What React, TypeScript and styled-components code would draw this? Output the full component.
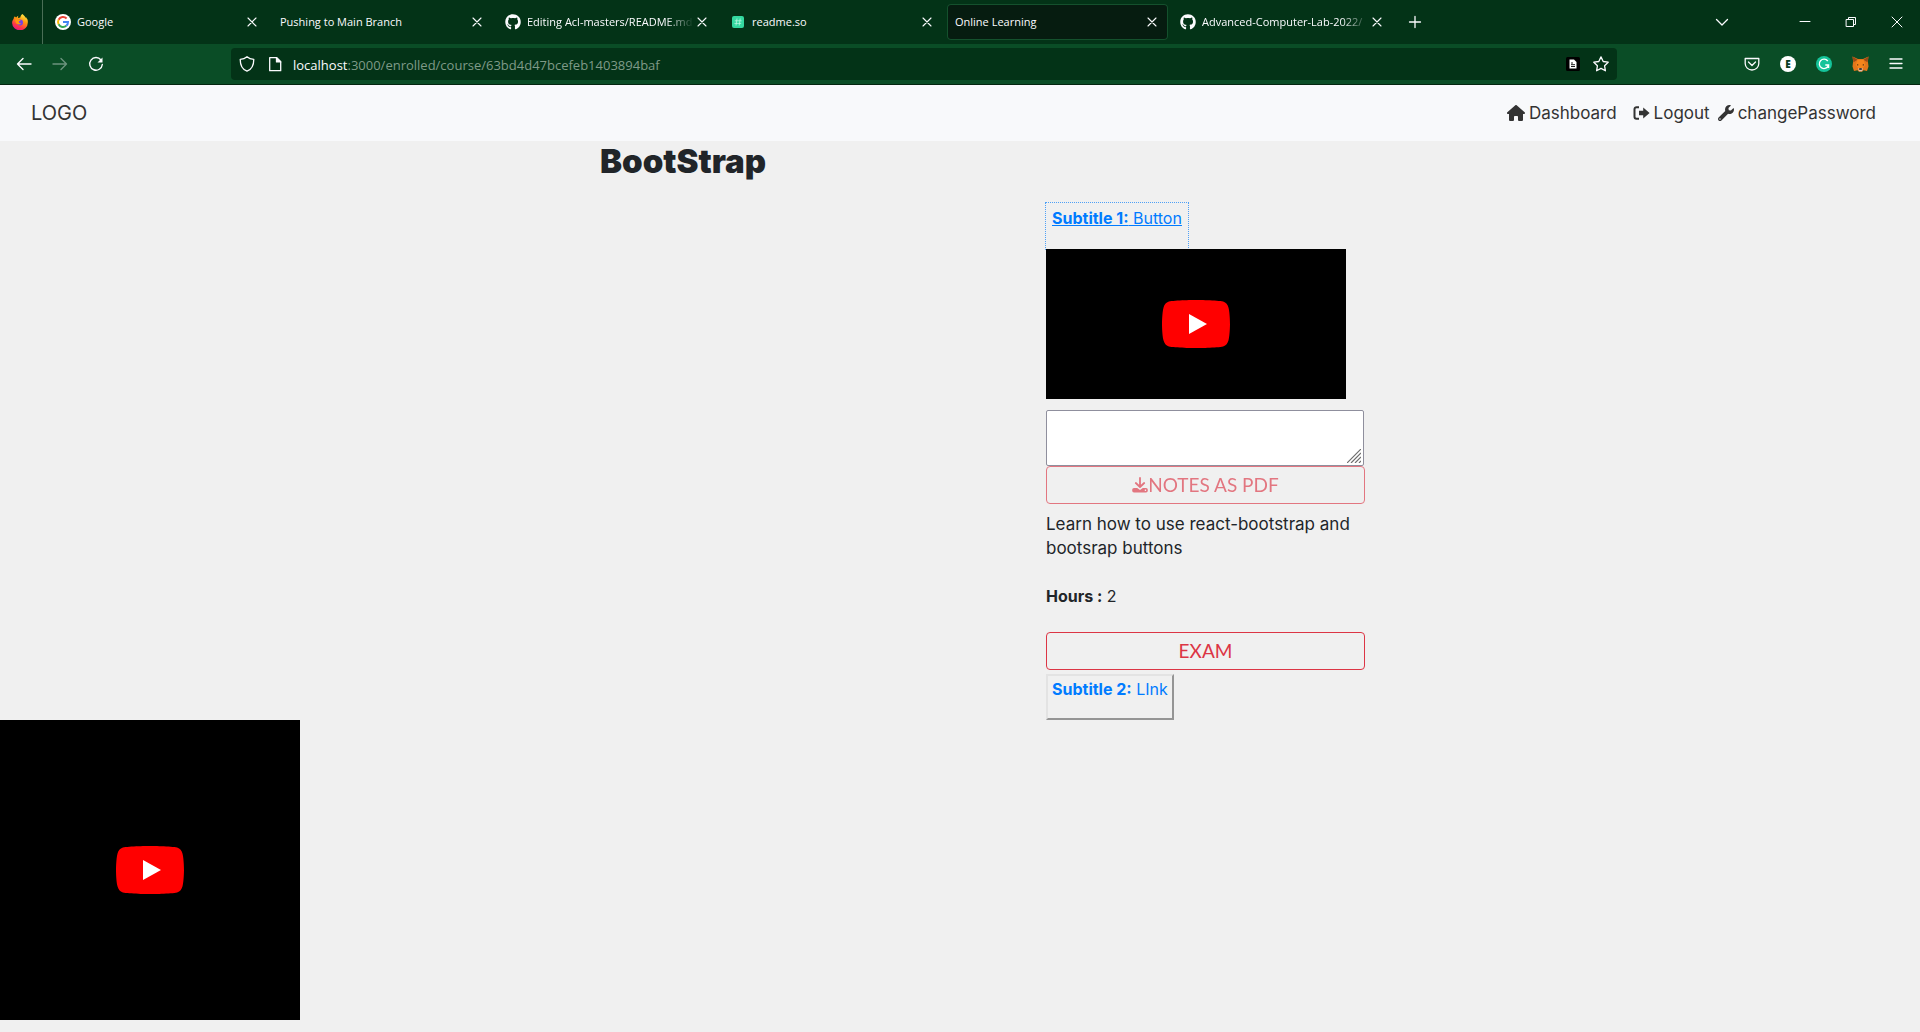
import React from "react";
import styled, { createGlobalStyle, css } from "styled-components";
import { FaGithub, FaWrench } from "react-icons/fa";
import { FaHouse } from "react-icons/fa6";

const Global = createGlobalStyle`
  *, *::before, *::after { box-sizing: border-box; }
  body {
    margin: 0;
    background: #f0f0f0;
    color: #212529;
    font: 17px/24px Inter, "Liberation Sans", sans-serif;
  }
  button, textarea, input { font: inherit; color: inherit; }
  svg { display: block; flex: none; }
`;

const uiFont = css`
  font-family: "Open Sans", "Noto Sans", sans-serif;
`;

/* ---------- browser frame ---------- */

const Frame = styled.header`
  ${uiFont}
  color: #fbfbfe;
  border-bottom: 1px solid #03250f;
`;

const TabBar = styled.div`
  display: flex;
  align-items: center;
  height: 44px;
  background: #033317;
`;

const BrandCell = styled.div`
  display: flex;
  align-items: center;
  justify-content: center;
  width: 43px;
  height: 44px;
  padding-right: 3px;
  border-right: 1px solid #4a6e56;
`;

const TabList = styled.div`
  display: flex;
  flex: 0 1 1346px;
  gap: 4px;
  min-width: 0;
  margin-left: 4px;
`;

const Tab = styled.div<{ $active?: boolean }>`
  display: flex;
  flex: 1 1 0;
  align-items: center;
  min-width: 0;
  height: 36px;
  padding: 0 8px;
  border-radius: 4px;
  ${(p) => p.$active && css`
    background: #061c10;
    box-shadow: inset 0 0 0 1px #14512d;
  `}
`;

const TabTitle = styled.button<{ $fade?: boolean }>`
  display: flex;
  flex: 1;
  align-items: center;
  gap: 6px;
  min-width: 0;
  height: 36px;
  padding: 0;
  border: 0;
  background: none;
  font-size: 11px;
  line-height: 16px;
  white-space: nowrap;
  overflow: hidden;
  ${(p) => p.$fade && css`
    mask-image: linear-gradient(to left, transparent, #000 28px);
  `}
`;

const IconButton = styled.button<{ $w?: number; $dim?: boolean }>`
  display: flex;
  align-items: center;
  justify-content: center;
  flex: none;
  width: ${(p) => p.$w ?? 36}px;
  height: 32px;
  padding: 0;
  border: 0;
  background: none;
  opacity: ${(p) => (p.$dim ? 0.4 : 1)};
`;

const TabsMenu = styled.div`
  display: flex;
  margin-left: auto;
`;

const WindowControls = styled.div`
  display: flex;
  margin-left: 42px;
`;

const Toolbar = styled.div`
  display: flex;
  align-items: center;
  height: 40px;
  padding: 0 6px;
  background: #0a4d26;
`;

const ToolGroup = styled.div`
  display: flex;
  flex: 1 0 auto;
`;

const ToolGroupEnd = styled(ToolGroup)`
  justify-content: flex-end;
`;

const UrlBar = styled.div`
  display: flex;
  align-items: center;
  flex: 0 1 1386px;
  min-width: 0;
  height: 32px;
  padding: 0 2px;
  border-radius: 4px;
  background: #033317;
`;

const Address = styled.div`
  flex: 1;
  min-width: 0;
  padding: 2px 0 0 4px;
  overflow: hidden;
  white-space: nowrap;
  font-size: 13px;
  line-height: 20px;
  color: #7f9a88;
  span { color: #fbfbfe; }
`;

/* ---------- page ---------- */

const SiteNav = styled.nav`
  display: flex;
  align-items: center;
  justify-content: space-between;
  height: 56px;
  padding: 0 44px 0 31px;
  background: #f8f9fb;
  color: #333;
`;

const Brand = styled.a`
  font-size: 20px;
  line-height: 30px;
  color: inherit;
  text-decoration: none;
`;

const NavLinks = styled.div`
  display: flex;
  align-items: center;
`;

const NavLink = styled.a<{ $gap?: number }>`
  display: flex;
  align-items: center;
  gap: 4px;
  margin-left: ${(p) => p.$gap ?? 0}px;
  color: inherit;
  text-decoration: none;
`;

const Course = styled.main`
  display: grid;
  grid-template-columns: 600fr 446fr 319fr 555fr;
`;

const Title = styled.h1`
  grid-column: 2 / -1;
  margin: 0 0 22px;
  font-size: 33px;
  font-weight: 900;
  line-height: 40px;
`;

const Lesson = styled.section`
  grid-column: 3;
  display: flex;
  flex-direction: column;
  align-items: flex-start;
`;

const SubtitleButton = styled.button<{ $focused?: boolean }>`
  height: 46px;
  padding: 1px 4px 17px;
  border: 2px solid;
  border-color: #e3e3e3 #959595 #959595 #e3e3e3;
  background: none;
  color: #007bff;
  white-space: nowrap;
  font-size: 16px;
  line-height: 24px;
  ${(p) => p.$focused && css`
    border-color: transparent;
    outline: 1px dotted #4fa0f5;
    text-decoration: underline;
  `}
`;

const Video = styled.div<{ $h: number }>`
  position: relative;
  z-index: 1;
  display: flex;
  align-items: center;
  justify-content: center;
  width: 300px;
  height: ${(p) => p.$h}px;
  background: #000;
`;

const PlayButton = styled.button`
  padding: 0;
  border: 0;
  background: none;
`;

const NotesField = styled.div`
  position: relative;
  width: 100%;
  margin-top: 11px;
  padding-right: 1px;
`;

const Notes = styled.textarea`
  display: block;
  width: 100%;
  height: 56px;
  padding: 2px;
  border: 1px solid #8f8f9d;
  border-radius: 2px;
  background: #fff;
  resize: none;
`;

const Grip = styled.svg`
  position: absolute;
  right: 4px;
  bottom: 3px;
  pointer-events: none;
`;

const OutlineButton = styled.button<{ $muted?: boolean }>`
  display: flex;
  align-items: center;
  justify-content: center;
  width: 100%;
  height: 38px;
  padding: 0 12px;
  border: 1px solid #dc3545;
  border-radius: 4px;
  background: none;
  color: #dc3545;
  font-family: Lato, "Liberation Sans", sans-serif;
  font-size: 19px;
  opacity: ${(p) => (p.$muted ? 0.65 : 1)};
`;

const Details = styled.div`
  margin: 8px 0 24px;
  p { margin: 0 0 24px; }
  p:last-child { margin: 0; font-size: 16px; }
`;

const Spacer = styled.div`
  height: 4px;
`;

/* ---------- drawings ---------- */

const Line = ({ d, size = 16, w = 1.3 }: { d: string; size?: number; w?: number }) => (
  <svg width={size} height={size} viewBox="0 0 16 16" fill="none" stroke="currentColor"
    strokeWidth={w} strokeLinecap="round" strokeLinejoin="round"><path d={d} /></svg>
);

const Firefox = () => (
  <svg width="16" height="16" viewBox="0 0 16 16">
    <defs>
      <linearGradient id="fx" x1="0.8" y1="0" x2="0.3" y2="1">
        <stop offset="0" stopColor="#fff44f" /><stop offset="0.4" stopColor="#ff980e" />
        <stop offset="0.75" stopColor="#ff3647" /><stop offset="1" stopColor="#e31587" />
      </linearGradient>
    </defs>
    <path fill="url(#fx)" d="M15.4 5.3c-.4-.9-1.1-1.8-1.7-2.1.3.6.5 1.1.6 1.5C13.300 2.500 11.700 1.500 10.500 0 8.900 1 8.400 2.700 8.300 3.500c-.8 0-1.500.3-2.100.6-.3-.8-.2-1.700.2-2.400-.9.4-1.700 1.200-2.200 1.800-.6-.1-1.100-.7-1.200-1.200C1.700 3.200 1.700 4.300 1.700 4.800.700 6 .1 7.500.1 9a7.800 7.400 0 0 0 15.700-.3c.1-1.200 0-2.400-.4-3.400z" />
    <circle cx="8" cy="8.400" r="3" fill="#7542e5" />
    <path fill="#ff980e" d="M3 5.500c1.300-.8 2.600-.7 3.800.2 1 .1 1.900.1 1.700.7-.3.600-1.400.6-1.700 1.100-.1 1.500 1.300 2 2.600 1.500-1.300 2.300-5.600 1.700-6-1.600z" />
  </svg>
);

const Google = () => (
  <svg width="16" height="16" viewBox="0 0 16 16">
    <circle cx="8" cy="8" r="8" fill="#fff" />
    <g fill="none" strokeWidth="2">
      <path stroke="#ea4335" d="M3.600 5.700A5 5 0 0 1 11.600 4.500" />
      <path stroke="#fbbc05" d="M3.600 10.300A5 5 0 0 1 3.600 5.700" />
      <path stroke="#34a853" d="M11.300 11.800A5 5 0 0 1 3.600 10.300" />
      <path stroke="#4285f4" d="M8 8h5A5 5 0 0 1 11.300 11.800" />
    </g>
  </svg>
);

const ReadmeSo = () => (
  <svg width="16" height="16" viewBox="0 0 16 16">
    <rect x="2" y="2" width="12" height="12" rx="2" fill="#34d9a0" />
    <path d="M7 4.500l-1 7M10.200 4.500l-1 7M4.800 6.800h6.800M4.400 9.400h6.800" stroke="#b8f7df" strokeWidth="0.800" />
  </svg>
);

const PageBadge = () => (
  <svg width="14" height="14" viewBox="0 0 14 14">
    <rect width="14" height="14" rx="1.500" fill="#000" />
    <path d="M3.500 2.500h4.500l2.500 2.500v6.500h-7z" fill="#fff" />
    <path d="M5 6h2M5 7.700h4M5 9.500h4" stroke="#000" strokeWidth="0.900" />
  </svg>
);

const Grammarly = () => (
  <svg width="16" height="16" viewBox="0 0 16 16">
    <circle cx="8" cy="8" r="8" fill="#15c39a" />
    <path d="M11.800 5A4.700 4.700 0 1 0 12.500 9.300M9.300 9h3.300v3" fill="none" stroke="#fff" strokeWidth="1.300" />
  </svg>
);

const AccountBadge = styled.span`
  display: flex;
  align-items: center;
  justify-content: center;
  width: 16px;
  height: 16px;
  border-radius: 50%;
  background: #fff;
  color: #0a3d20;
  font-size: 10px;
  font-weight: 800;
  line-height: 16px;
`;

const Fox = () => (
  <svg width="17" height="16" viewBox="0 0 17 16">
    <path fill="#e2761b" d="M.5.500l5.500 2.500h5l5.500-2.500-.6 5 .6 5-1.500 4.500-3.500-.8-1.500 1.500h-3l-1.500-1.500-3.500.8L.5 10.500l.6-5z" />
    <path fill="#9a4a17" d="M.5.500l5 3.300-4 2.500zM16.500.500l-5 3.300 4 2.500z" />
    <path fill="#f6851b" d="M5.500 4h6l2 5-3 3.500h-4l-3-3.500z" />
    <path fill="#d7c1b3" d="M6.200 12.200h4.600l-.6 3h-3.400z" />
    <path fill="#161616" d="M7.300 12.200h2.400l.2 1.500h-2.800zM5 8.300l1.800.8-1.600.4zM12 8.300l-1.800.8 1.600.4z" />
  </svg>
);

const YouTube = () => (
  <svg width="68" height="48" viewBox="0 0 68 48">
    <path fill="#f00" d="M66.520 7.740c-.78-2.930-2.490-5.410-5.420-6.190C55.790.130 34 0 34 0S12.210.130 6.900 1.550c-2.930.780-4.630 3.260-5.420 6.190C.060 13.050 0 24 0 24s.060 10.950 1.480 16.260c.780 2.930 2.490 5.410 5.420 6.190C12.210 47.870 34 48 34 48s21.790-.130 27.100-1.550c2.930-.780 4.640-3.260 5.420-6.190C67.940 34.950 68 24 68 24s-.060-10.950-1.480-16.260z" />
    <path fill="#fff" d="M45 24 27 14v20" />
  </svg>
);

const LogoutIcon = () => (
  <svg width="17" height="16" viewBox="0 0 17 16">
    <path d="M6 2.200H3.500a2 2 0 0 0-2 2v7.600a2 2 0 0 0 2 2H6" fill="none" stroke="currentColor" strokeWidth="2" />
    <path d="M6 5.800h4.200V2.600L16.600 8l-6.400 5.400v-3.200H6z" fill="currentColor" />
  </svg>
);

const DownloadIcon = () => (
  <svg width="16" height="16" viewBox="0 0 16 16">
    <path d="M8 1v8.500M3.800 6L8 10L12.200 6" fill="none" stroke="currentColor" strokeWidth="1.800" strokeLinecap="round" strokeLinejoin="round" />
    <path fillRule="evenodd" d="M2 11h3.200L8 13l2.800-2H14a1.800 1.800 0 0 1 1.800 1.800v1A1.800 1.800 0 0 1 14 15.600H2A1.800 1.800 0 0 1 .2 13.800v-1A1.800 1.800 0 0 1 2 11zM12.800 12.600v1.300h1.300v-1.300z" fill="currentColor" />
  </svg>
);

const Close = () => <Line size={16} w={1.1} d="M4 4l8 8M12 4l-8 8" />;

const tabs = [
  { title: "Google", icon: <Google /> },
  { title: "Pushing to Main Branch" },
  { title: "Editing Acl-masters/README.md", icon: <FaGithub size={16} />, fade: true },
  { title: "readme.so", icon: <ReadmeSo /> },
  { title: "Online Learning", active: true },
  { title: "Advanced-Computer-Lab-2022/", icon: <FaGithub size={16} />, fade: true },
];

function BrowserFrame() {
  return (
    <Frame>
      <TabBar>
        <BrandCell><Firefox /></BrandCell>
        <TabList>
          {tabs.map((t) => (
            <Tab key={t.title} $active={t.active}>
              <TabTitle $fade={t.fade}>{t.icon}{t.title}</TabTitle>
              <IconButton $w={16} aria-label={`Close ${t.title}`}><Close /></IconButton>
            </Tab>
          ))}
        </TabList>
        <IconButton $w={44} aria-label="New tab"><Line d="M8 2.500v11M2.500 8h11" /></IconButton>
        <TabsMenu>
          <IconButton $w={36} aria-label="List all tabs"><Line d="M2.500 5.500L8 11l5.500-5.500" /></IconButton>
        </TabsMenu>
        <WindowControls>
          <IconButton $w={46} aria-label="Minimize"><Line w={1} d="M3 7.500h10" /></IconButton>
          <IconButton $w={46} aria-label="Restore"><Line w={1} d="M3.500 5.500h7v7h-7zM5.500 5.500v-2h7v7h-2" /></IconButton>
          <IconButton $w={46} aria-label="Close window"><Line w={1} d="M3 3l10 10M13 3L3 13" /></IconButton>
        </WindowControls>
      </TabBar>
      <Toolbar>
        <ToolGroup>
          <IconButton aria-label="Back"><Line w={1.4} d="M15 8H1.500M7 2.500L1.500 8L7 13.500" /></IconButton>
          <IconButton $dim aria-label="Forward"><Line w={1.4} d="M1 8h13.500M9 2.500L14.500 8L9 13.500" /></IconButton>
          <IconButton aria-label="Reload">
            <svg width="16" height="16" viewBox="0 0 16 16" fill="none" stroke="currentColor" strokeWidth="1.400" strokeLinecap="round">
              <path d="M13 4A6.300 6.300 0 1 0 14.300 8.500" />
              <path d="M14.500 1.500v5h-5z" fill="currentColor" stroke="none" />
            </svg>
          </IconButton>
        </ToolGroup>
        <UrlBar>
          <IconButton $w={28} aria-label="Tracking protection">
            <Line d="M8 .8C6 2.600 3.500 3.200 1.200 3.300C1.200 9 3.200 13.500 8 15.200C12.800 13.500 14.800 9 14.800 3.300C12.500 3.200 10 2.600 8 .8z" />
          </IconButton>
          <IconButton $w={28} aria-label="Site information">
            <svg width="16" height="16" viewBox="0 0 16 16" fill="none" stroke="currentColor" strokeWidth="1.300" strokeLinejoin="round">
              <path d="M2.700 1.700h7l4 4v9h-11z" /><path d="M9.500 1.700v4.200h4.200z" fill="currentColor" />
            </svg>
          </IconButton>
          <Address><span>localhost</span>:3000/enrolled/course/63bd4d47bcefeb1403894baf</Address>
          <IconButton $w={28} aria-label="Page action"><PageBadge /></IconButton>
          <IconButton $w={28} aria-label="Bookmark this page">
            <Line d="M8 .9l2.200 4.600 5 .7-3.600 3.600.8 5L8 12.400l-4.400 2.400.8-5L.8 6.200l5-.7z" />
          </IconButton>
        </UrlBar>
        <ToolGroupEnd>
          <IconButton aria-label="Save to Pocket">
            <Line d="M1.200 2.500h13.600v5a6.800 6.500 0 0 1-13.600 0zM4.500 6L8 9.500L11.500 6" />
          </IconButton>
          <IconButton aria-label="Account"><AccountBadge>E</AccountBadge></IconButton>
          <IconButton aria-label="Grammarly"><Grammarly /></IconButton>
          <IconButton aria-label="MetaMask"><Fox /></IconButton>
          <IconButton aria-label="Menu"><Line w={1.3} d="M2 3h12M2 7.500h12M2 12h12" /></IconButton>
        </ToolGroupEnd>
      </Toolbar>
    </Frame>
  );
}

export default function App() {
  return (
    <>
      <Global />
      <BrowserFrame />
      <SiteNav>
        <Brand href="#">LOGO</Brand>
        <NavLinks>
          <NavLink href="#"><FaHouse size={18} />Dashboard</NavLink>
          <NavLink href="#" $gap={16}><LogoutIcon />Logout</NavLink>
          <NavLink href="#" $gap={8}><FaWrench size={16} />changePassword</NavLink>
        </NavLinks>
      </SiteNav>
      <Course>
        <Title>BootStrap</Title>
        <Lesson>
          <SubtitleButton $focused><b>Subtitle 1:</b> Button</SubtitleButton>
          <Video $h={150}><PlayButton aria-label="Play Subtitle 1"><YouTube /></PlayButton></Video>
          <NotesField>
            <Notes aria-label="Notes" />
            <Grip width="14" height="14" viewBox="0 0 14 14" stroke="#6e6e6e" strokeWidth="1.200">
              <path d="M0 14L14 0M4 14L14 4M8 14l6-6M12 14l2-2" />
            </Grip>
          </NotesField>
          <OutlineButton $muted disabled><DownloadIcon />NOTES AS PDF</OutlineButton>
          <Details>
            <p>Learn how to use react-bootstrap and bootsrap buttons</p>
            <p><b>Hours :</b> 2</p>
          </Details>
          <OutlineButton>EXAM</OutlineButton>
          <Spacer />
          <SubtitleButton><b>Subtitle 2:</b> LInk</SubtitleButton>
        </Lesson>
      </Course>
      <Video $h={300}><PlayButton aria-label="Play Subtitle 2"><YouTube /></PlayButton></Video>
    </>
  );
}
